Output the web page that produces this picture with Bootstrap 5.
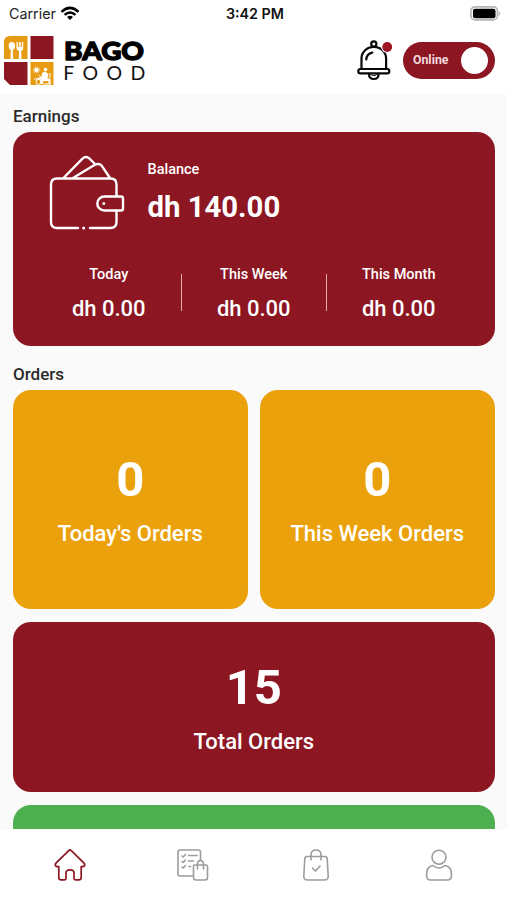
<!DOCTYPE html>
<html lang="en">
<head>
<meta charset="utf-8">
<meta name="viewport" content="width=device-width, initial-scale=1">
<title>Bago Food</title>
<link href="https://cdn.jsdelivr.net/npm/bootstrap@5.3.0/dist/css/bootstrap.min.css" rel="stylesheet">
<style>
:root{--maroon:#8c1622;--amber:#eba10b;--green:#4caf50}
body{font-family:Roboto,sans-serif;color:#222;background:#fff;line-height:1.2}
.screen{height:900px}
.statusbar{height:27px;font-family:Inter,sans-serif;font-size:14.3px;color:#222;padding:0 6px 0 9px}
.statusbar>div{flex:1 1 0}
.clock{font-weight:600;font-size:14.3px;color:#111}
.topbar{height:67px;padding:0 12px 0 4px}
.brand-name{font-family:Lato,sans-serif;font-weight:900;fill:#000;stroke:#000;stroke-width:1.3;stroke-linejoin:round}
.brand-sub{font-family:Lato,sans-serif;fill:#111}
.online{width:92px;height:37px;border-radius:19px;background:var(--maroon);color:#f3dadd;font-size:12.3px;padding:0 7px 0 10px}
.knob{width:27px;height:27px}
.feed{background:#fafafa;height:735px;padding:0 12.5px 0 13px}
.section-label{font-size:17px;font-weight:500;line-height:20px;color:#2a2a2a}
.earnings-label{padding:12px 0 6px}
.orders-label{margin:18px 0 6px}
.tile{border-radius:18px;color:#fff;border:0}
.maroon{background:var(--maroon)}
.amber{background:var(--amber)}
.green{background:var(--green);height:100px}
.earn{height:213.5px}
.wallet-row{padding:23px 0 0 36px;height:120px;gap:22.5px}
.label-sm{font-size:14.5px;font-weight:500;line-height:18px}
.balance-label{margin-top:6px}
.balance{font-size:29.3px;font-weight:700;line-height:34px;margin-top:11px}
.amount{font-size:22px;font-weight:500;line-height:26px;margin-top:12px}
.split{width:1.5px;height:37px;margin-top:10px;background:#e0a9ae}
.period{flex:1 1 0;padding-top:14px}
.count{font-size:49px;font-weight:700;line-height:58px}
.caption{font-size:22px;font-weight:500;line-height:26px}
.pair{gap:12.5px;margin-bottom:13px}
.pair .tile{flex:1 1 0;height:219px}
.total{height:170.5px;margin-bottom:12.5px}
.tabs{height:71px;padding:0 6px 0 8px}
.tabs a{flex:1 1 0;color:#9c9c9c}
.tabs a.on{color:var(--maroon)}
svg{display:block}
</style>
</head>
<body>
<div class="screen d-flex flex-column overflow-hidden">
  <div class="statusbar d-flex align-items-center">
    <div class="d-flex align-items-center gap-1"><span>Carrier</span>
      <svg width="20" height="15" viewBox="0 0 20 15" fill="none" stroke="#000" stroke-width="2.500"><path d="M1.500 5.800Q10-2 18.500 5.800M4.600 8.900Q10 4 15.400 8.900"/><path d="M10 14l-3-3Q10 8.600 13 11z" fill="#000" stroke="none"/></svg>
    </div>
    <div class="clock text-center">3:42 PM</div>
    <div class="d-flex justify-content-end">
      <svg width="31" height="15" viewBox="0 0 31 15"><rect x=".9" y=".9" width="26.500" height="13" rx="4" fill="#fff" stroke="#b5b5b5" stroke-width="1.700"/><rect x="3" y="2.700" width="22.500" height="9.500" rx="2" fill="#000"/><path d="M28.800 5q2.600 2.400 0 4.800z" fill="#aaa"/></svg>
    </div>
  </div>

  <header class="topbar d-flex align-items-center">
    <svg width="146" height="54" viewBox="4 33 146 54">
      <path d="M10 35H27.500V58H4V41Q4 35 10 35z" fill="#e69b12"/>
      <path d="M30.500 35H53.500V58H30.500z" fill="#8c1622"/>
      <path d="M4 61H27.500V84H10L4 78z" fill="#8c1622"/>
      <path d="M30.500 61H53.500V84H30.500z" fill="#e69b12"/>
      <g fill="#fff"><ellipse cx="11.800" cy="45" rx="3.200" ry="4"/><path d="M10.900 48h1.800l.4 10h-2.600zM16.500 41h1.400v5h1.200v-5h1.500v5h1.200v-5h1.400v6q0 2.500-2 2.900l.3 8.100h-2.700l.3-8.100q-2.600-.4-2.600-2.900z"/>
      <circle cx="36.500" cy="69" r="2.200"/><circle cx="45.500" cy="68.500" r="1.800"/><path d="M42 72l3-1.500 3.500 2.500-1 4 3 1v5h-2v-3h-5l-1 3h-2v-5h-3v-1.500h4z"/></g>
      <g fill="none" stroke="#fff" stroke-width="1"><circle cx="36.500" cy="69" r="3" stroke-dasharray="1 1"/><circle cx="38.500" cy="81" r="2.500"/><path d="M39 74l4 4M50 72v5M43 83h8M34 78h7"/></g>
      <text class="brand-name" x="64" y="59.300" font-size="25.500" textLength="80" lengthAdjust="spacingAndGlyphs">BAGO</text>
      <text class="brand-sub" x="63.300" y="78.500" font-size="19.500" textLength="82" lengthAdjust="spacing">FOOD</text>
    </svg>
    <div class="ms-auto d-flex align-items-center">
      <svg class="me-2" width="40" height="42" viewBox="355 39 40 42" fill="none" stroke="#080808" stroke-width="2.200" stroke-linecap="round" stroke-linejoin="round">
        <circle cx="373.800" cy="43" r="2.600"/><path d="M361.500 68V57.500a12.300 11.700 0 0 1 24.600 0V68M366.300 58.500q.2-5.500 6-6.900"/><rect x="358.300" y="68" width="31" height="4.300" rx="2.150"/><path d="M369 73q0 5 4.800 5t4.800-5"/><path d="M370.500 73q.5 1.600 3.300 1.600t3.300-1.600" stroke-width="1"/>
        <circle cx="387.200" cy="46" r="6" fill="#fff" stroke="none"/><circle cx="387.200" cy="46" r="4.900" fill="#9b1524" stroke="none"/>
      </svg>
      <div class="online d-flex align-items-center justify-content-between fw-bold"><span>Online</span><span class="knob rounded-circle bg-white"></span></div>
    </div>
  </header>

  <main class="feed overflow-hidden">
    <div class="section-label earnings-label">Earnings</div>
    <section class="tile maroon earn card">
      <div class="wallet-row d-flex align-items-start">
        <svg width="76" height="76" viewBox="49 155 76 76" fill="none" stroke="#fff" stroke-width="2.400" stroke-linecap="round" stroke-linejoin="round">
          <path d="M78 228H57q-6 0-6-6V184.500q0-6 6-6H110.500q6 0 6 6V195M116.500 211V222q0 6-6 6H90M63.500 178L82.500 158.700q3.500-3.200 7 0L95 164M73 178L94 165.300q6-3.200 8.500 1.500L110 178"/><path d="M121 196.500H104.300a7 7 0 0 0 0 14H121q2 0 2-2V198.500q0-2-2-2z"/><path d="M83.700 228h.01M103.800 203.500h.01" stroke-width="3"/>
        </svg>
        <div><div class="label-sm balance-label">Balance</div><div class="balance">dh 140.00</div></div>
      </div>
      <div class="d-flex align-items-center px-4 text-center">
        <div class="period"><div class="label-sm">Today</div><div class="amount">dh 0.00</div></div>
        <div class="split"></div>
        <div class="period"><div class="label-sm">This Week</div><div class="amount">dh 0.00</div></div>
        <div class="split"></div>
        <div class="period"><div class="label-sm">This Month</div><div class="amount">dh 0.00</div></div>
      </div>
    </section>

    <div class="section-label orders-label">Orders</div>
    <div class="pair d-flex">
      <section class="tile amber d-flex flex-column align-items-center justify-content-center"><div class="count">0</div><div class="caption mt-2 pt-1">Today's Orders</div></section>
      <section class="tile amber d-flex flex-column align-items-center justify-content-center"><div class="count">0</div><div class="caption mt-2 pt-1">This Week Orders</div></section>
    </div>
    <section class="tile maroon total d-flex flex-column align-items-center justify-content-center"><div class="count">15</div><div class="caption mt-2 pt-1">Total Orders</div></section>
    <section class="tile green"></section>
  </main>

  <nav class="tabs d-flex align-items-center bg-white">
    <a class="on d-flex justify-content-center" href="#" aria-label="Home"><svg width="32" height="32" viewBox="0 0 32 32" fill="none" stroke="currentColor" stroke-width="1.700" stroke-linejoin="round"><path d="M14.700 1.600q1.300-1.200 2.600 0L30 14.200q1.200 1.300.4 2.600t-3.200.7V28.500q0 2.300-2.200 2.300h-3.500q-1.500 0-1.500-1.500V24q0-3.200-4-3.200T12 24V29.300q0 1.500-1.500 1.500H7q-2.200 0-2.200-2.300V17.500q-2.400.6-3.200-.7T2 14.200z"/></svg></a>
    <a class="d-flex justify-content-center" href="#" aria-label="Order list"><svg width="32" height="32" viewBox="0 0 32 32" fill="none" stroke="currentColor" stroke-width="1.600" stroke-linecap="round" stroke-linejoin="round"><path d="M15.500 27H3q-2 0-2-2V3q0-2 2-2H21.500q2 0 2 2V11M11.500 6.500H20M11.500 12H16.500M12 17.500h1.500M5 7l1.200 1L8.500 5.500M5 12.500l1.200 1L8.500 11M5 18l1.200 1L8.500 16.500"/><path d="M17.500 16H29q1.500 0 1.500 1.500V28.500q0 2.500-2.500 2.500H19q-2.500 0-2.500-2.500V17q0-1 1-1zM20.500 20V15q0-3.500 2.800-3.500T26.500 15v5"/></svg></a>
    <a class="d-flex justify-content-center" href="#" aria-label="Completed"><svg width="32" height="32" viewBox="0 0 32 32" fill="none" stroke="currentColor" stroke-width="1.600" stroke-linecap="round" stroke-linejoin="round"><path d="M7 7.500H25q2 0 2.200 2L28.200 27q.2 4-4 4H7.800q-4.200 0-4-4L4.800 9.500q.2-2 2.200-2zM11 11V6q0-5 5-5t5 5v5M12.500 19l3 3 4.500-5"/></svg></a>
    <a class="d-flex justify-content-center" href="#" aria-label="Profile"><svg width="32" height="32" viewBox="0 0 32 32" fill="none" stroke="currentColor" stroke-width="1.600" stroke-linejoin="round"><circle cx="16" cy="8.200" r="7"/><path d="M10 16.500q6 5 12 0c4 .5 6.500 4 6.500 9.500q0 5-4 5h-17q-4 0-4-5c0-5.500 2.500-9 6.500-9.500z"/></svg></a>
  </nav>
</div>
<script src="https://cdn.jsdelivr.net/npm/bootstrap@5.3.0/dist/js/bootstrap.bundle.min.js"></script>
</body>
</html>
